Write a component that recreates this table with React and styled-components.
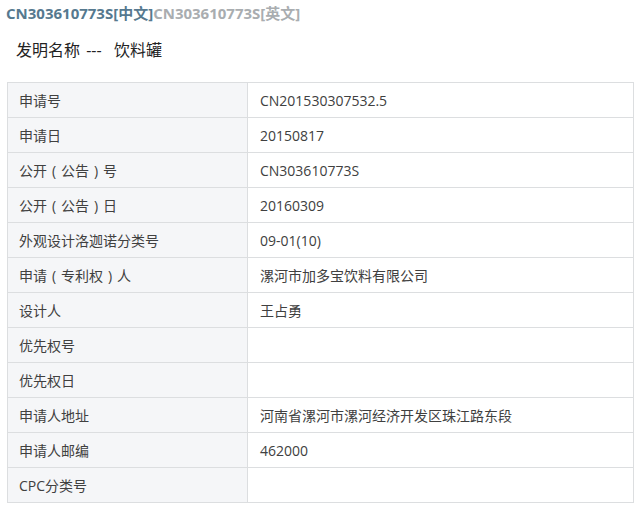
import React from 'react';
import styled, { createGlobalStyle } from 'styled-components';

const GlobalStyle = createGlobalStyle`
  html, body {
    margin: 0;
    padding: 0;
    background: #fff;
  }
  body {
    font-family: "Open Sans", "Noto Sans CJK SC", sans-serif;
    color: #3a3a3a;
  }
`;

const Page = styled.div`
  width: 641px;
  height: 506px;
  overflow: hidden;
`;

const Header = styled.div`
  height: 24px;
  padding-left: 6px;
  display: flex;
  align-items: center;
  font-size: 15px;
  font-weight: bold;
  white-space: nowrap;
`;

const Lang = styled.span`
  color: ${p => (p.active ? '#56798f' : '#a9adb0')};
`;

const Title = styled.h1`
  margin: 0;
  padding: 13px 0 0 16px;
  height: 45px;
  box-sizing: border-box;
  font-size: 16px;
  font-weight: normal;
  color: #222;
  white-space: pre;
  word-spacing: 2px;
`;

const Table = styled.table`
  margin: 13px 0 0 7px;
  width: 627px;
  border-collapse: collapse;
  table-layout: fixed;
  font-size: 14px;
`;

const Cell = styled.td`
  height: 34px;
  padding: 0 0 0 ${p => (p.label ? 11 : 12)}px;
  border: 1px solid #dcdee0;
  background: ${p => (p.label ? '#f5f6f8' : '#fff')};
  color: #404040;
  vertical-align: middle;
  white-space: nowrap;
  overflow: hidden;
`;

// full-width bracket drawn centred in its em box
const Paren = styled.span`
  display: inline-block;
  width: 1em;
  text-align: center;
`;

const renderLabel = text =>
  text.split(/([（）])/).map((part, i) =>
    part === '（' ? <Paren key={i}>(</Paren> : part === '）' ? <Paren key={i}>)</Paren> : part
  );

const rows = [
  ['申请号', 'CN201530307532.5'],
  ['申请日', '20150817'],
  ['公开（公告）号', 'CN303610773S'],
  ['公开（公告）日', '20160309'],
  ['外观设计洛迦诺分类号', '09-01(10)'],
  ['申请（专利权）人', '漯河市加多宝饮料有限公司'],
  ['设计人', '王占勇'],
  ['优先权号', ''],
  ['优先权日', ''],
  ['申请人地址', '河南省漯河市漯河经济开发区珠江路东段'],
  ['申请人邮编', '462000'],
  ['CPC分类号', ''],
];

export default function App() {
  return (
    <Page>
      <GlobalStyle />
      <Header>
        <Lang active>CN303610773S[中文]</Lang>
        <Lang>CN303610773S[英文]</Lang>
      </Header>
      <Title>发明名称 ---  饮料罐</Title>
      <Table>
        <colgroup>
          <col style={{ width: 240 }} />
          <col />
        </colgroup>
        <tbody>
          {rows.map(([label, value]) => (
            <tr key={label}>
              <Cell label>{renderLabel(label)}</Cell>
              <Cell>{value}</Cell>
            </tr>
          ))}
        </tbody>
      </Table>
    </Page>
  );
}
